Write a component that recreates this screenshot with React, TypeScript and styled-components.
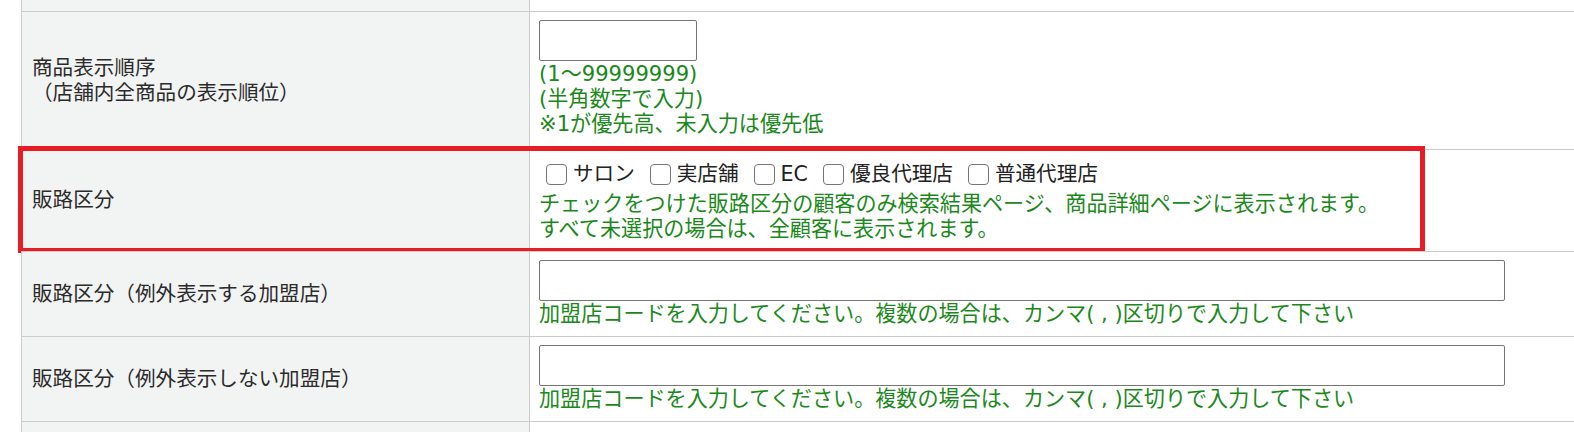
import React from "react";
import styled, { createGlobalStyle } from "styled-components";

const GlobalStyle = createGlobalStyle`
  html, body {
    margin: 0;
    padding: 0;
    background: #ffffff;
    overflow: hidden;
  }
  body {
    font-family: "DejaVu Sans", "Noto Sans CJK JP", sans-serif;
    font-size: 20.6px;
    line-height: 25px;
    color: #333333;
    text-spacing-trim: space-all;
  }
  * { box-sizing: border-box; }
`;

const Page = styled.div`
  padding-left: 21px;
  height: 432px;
  overflow: hidden;
`;

const Table = styled.div`
  display: flex;
  flex-direction: column;
`;

const Row = styled.div<{ $cut?: boolean; $tail?: boolean }>`
  position: relative;
  display: grid;
  grid-template-columns: 509px 1fr;
  border-top: ${(p) => (p.$cut ? "none" : "1px solid #cccccc")};
  height: ${(p) => (p.$cut ? "11px" : "auto")};
  min-height: ${(p) => (p.$tail ? "40px" : "0")};
`;

const LabelCell = styled.div`
  display: flex;
  align-items: center;
  padding: 0 10px;
  background: #f2f3f3;
  border-left: 1px solid #cccccc;
  border-right: 1px solid #cccccc;
  color: #2b2b2b;
  font-family: "DejaVu Sans", "Noto Sans CJK JP", sans-serif;
  font-size: 20.6px;
  line-height: 25px;
`;

const ValueCell = styled.div<{ $extraBottom?: number }>`
  padding: 8px 9px ${(p) => 10 + (p.$extraBottom ?? 0)}px;
  background: #ffffff;
`;

const TextInput = styled.input<{ $wide?: boolean }>`
  display: block;
  width: ${(p) => (p.$wide ? "966px" : "158px")};
  height: 41px;
  margin: 0;
  border: 1px solid #767676;
  border-radius: 2px;
  background: #ffffff;
  font: inherit;
  padding: 0 4px;
`;

const Hint = styled.div`
  color: #1a891a;
  font-size: 21.1px;
  line-height: 25px;
  white-space: nowrap;
`;

const CheckRow = styled.div`
  display: flex;
  align-items: center;
  gap: 15px;
  height: 33px;
  padding-left: 7px;
`;

const CheckOption = styled.label`
  display: inline-flex;
  align-items: center;
  gap: 6px;
  color: #222222;
  font-size: 20.6px;
  line-height: 25px;
  white-space: nowrap;
`;

const CheckBox = styled.input`
  appearance: none;
  -webkit-appearance: none;
  width: 21px;
  height: 21px;
  margin: 0;
  border: 1.5px solid #767676;
  border-radius: 4px;
  background: #ffffff;
`;

const Highlight = styled.div`
  position: absolute;
  top: -4px;
  left: -3px;
  bottom: -2px;
  width: 1407px;
  border: 5px solid #e81c24;
  pointer-events: none;
`;

const channels = ["サロン", "実店舗", "EC", "優良代理店", "普通代理店"];

const codeHint =
  "加盟店コードを入力してください。複数の場合は、カンマ( , )区切りで入力して下さい";

export default function App() {
  return (
    <>
      <GlobalStyle />
      <Page>
        <Table>
          <Row $cut>
            <LabelCell />
            <ValueCell />
          </Row>

          <Row>
            <LabelCell>
              <div>
                商品表示順序
                <br />
                （店舗内全商品の表示順位）
              </div>
            </LabelCell>
            <ValueCell $extraBottom={3}>
              <TextInput type="text" />
              <Hint>(1～99999999)</Hint>
              <Hint>(半角数字で入力)</Hint>
              <Hint>※1が優先高、未入力は優先低</Hint>
            </ValueCell>
          </Row>

          <Row>
            <LabelCell>販路区分</LabelCell>
            <ValueCell>
              <CheckRow>
                {channels.map((c) => (
                  <CheckOption key={c}>
                    <CheckBox type="checkbox" />
                    {c}
                  </CheckOption>
                ))}
              </CheckRow>
              <Hint>
                チェックをつけた販路区分の顧客のみ検索結果ページ、商品詳細ページに表示されます。
              </Hint>
              <Hint>すべて未選択の場合は、全顧客に表示されます。</Hint>
            </ValueCell>
            <Highlight />
          </Row>

          <Row>
            <LabelCell>販路区分（例外表示する加盟店）</LabelCell>
            <ValueCell>
              <TextInput type="text" $wide />
              <Hint>{codeHint}</Hint>
            </ValueCell>
          </Row>

          <Row>
            <LabelCell>販路区分（例外表示しない加盟店）</LabelCell>
            <ValueCell>
              <TextInput type="text" $wide />
              <Hint>{codeHint}</Hint>
            </ValueCell>
          </Row>

          <Row $tail>
            <LabelCell />
            <ValueCell />
          </Row>
        </Table>
      </Page>
    </>
  );
}
